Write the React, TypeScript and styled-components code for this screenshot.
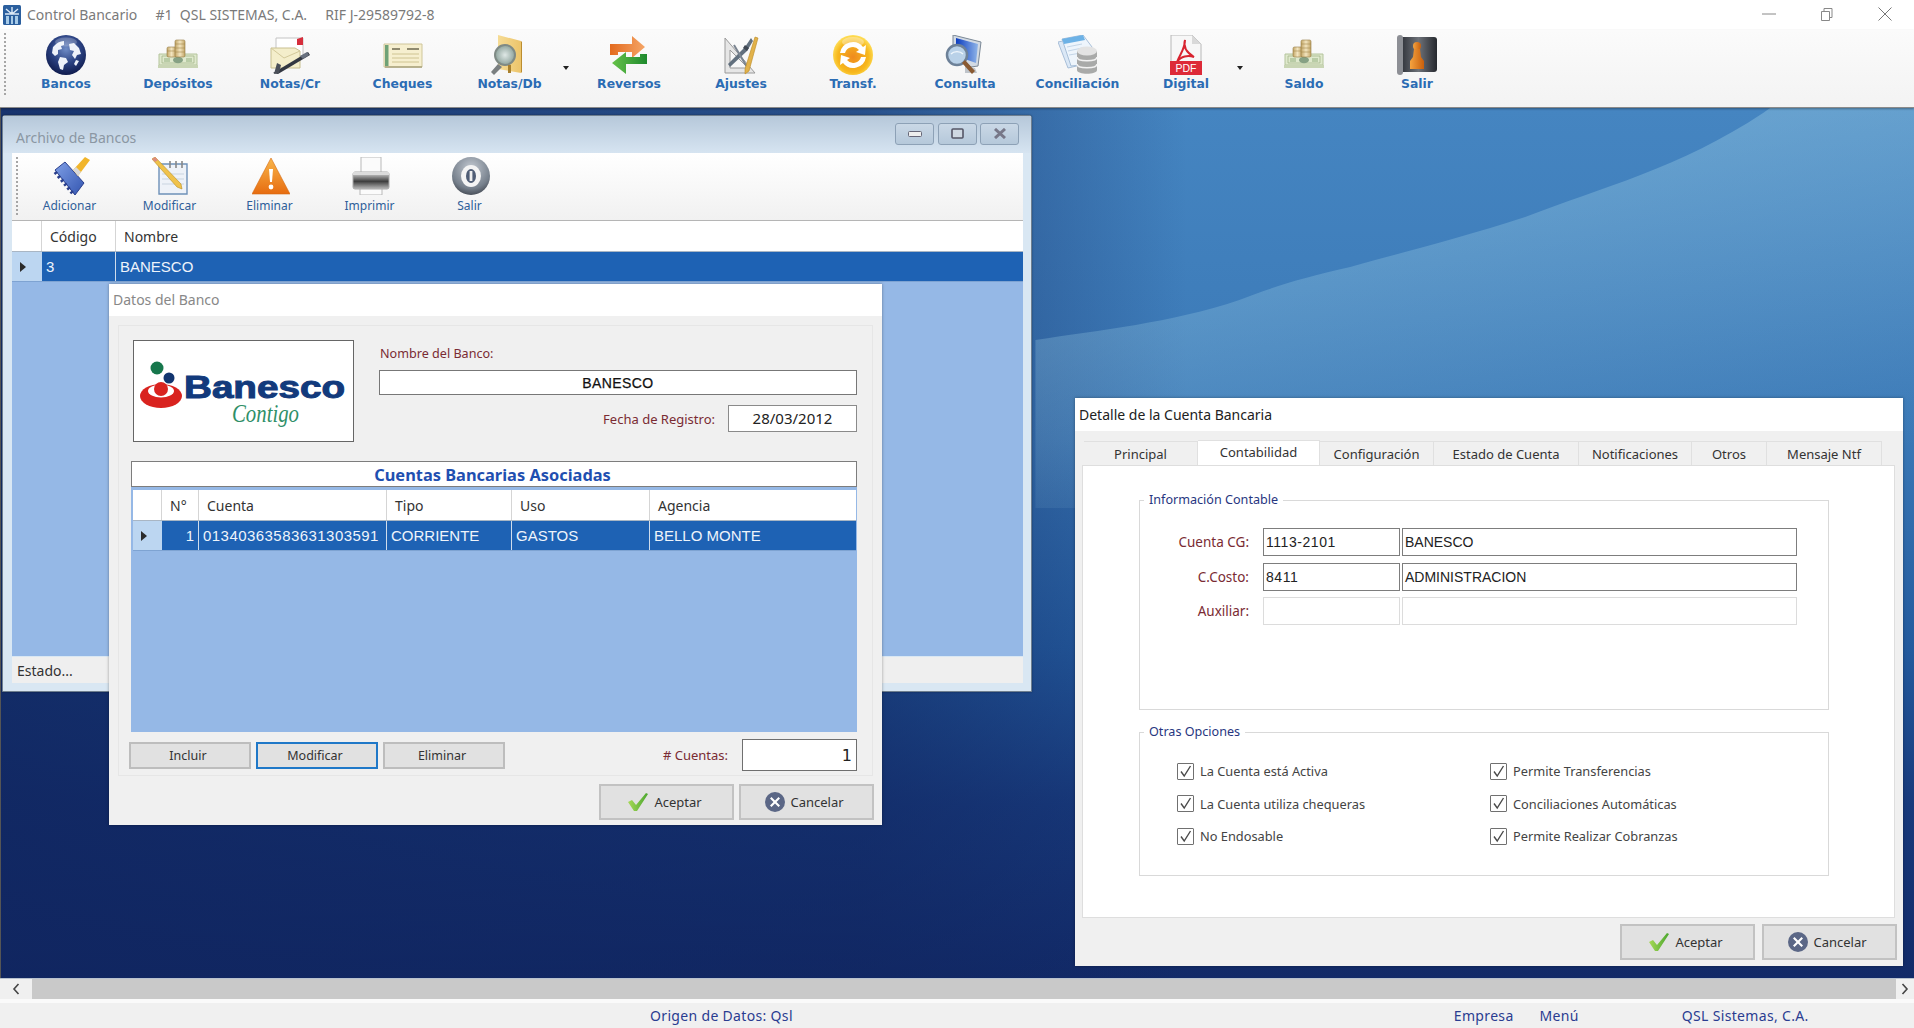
import React from "react";
import styled, { createGlobalStyle } from "styled-components";

const UI = `"Noto Sans", "Open Sans", sans-serif`;
const ARIAL = `"Liberation Sans", Arial, sans-serif`;

const Global = createGlobalStyle`
  html, body { margin: 0; padding: 0; height: 100%; overflow: hidden; background: #f0f0f0; }
  * { box-sizing: border-box; }
  #root { height: 100%; }
`;

const Page = styled.div`
  width: 1914px; height: 1028px; display: flex; flex-direction: column;
  font-family: ${UI}; overflow: hidden;
`;
const TitleBar = styled.div`
  height: 30px; background: #fff; display: flex; align-items: center; padding-left: 3px; flex: none;
`;
const TitleText = styled.span`
  margin-left: 6px; font-size: 14px; color: #7a7a7a; white-space: pre; position: relative; top: -1px;
`;
const WinControls = styled.div`
  margin-left: auto; display: flex; padding-right: 0; position: relative; top: -1px;
`;
const WinControl = styled.div`
  width: 58px; height: 28px; display: flex; align-items: center; justify-content: center;
`;
const MainToolbar = styled.div`
  height: 78px; flex: none; display: flex; position: relative; padding-left: 10px;
  background: linear-gradient(#fbfbfb, #f3f3f3);
  border-bottom: 1px solid #8a8a8a;
  box-shadow: 0 1px 2px rgba(0,0,0,.35);
  z-index: 2;
`;
const Grip = styled.div<{ $x: number; $h: number; $y: number }>`
  position: absolute; left: ${p => p.$x}px; top: ${p => p.$y}px; height: ${p => p.$h}px; width: 2px;
  background-image: linear-gradient(#a6a6a6 50%, transparent 50%); background-size: 2px 4px;
`;
const ToolButton = styled.div<{ $w: number }>`
  width: ${p => p.$w}px; flex: none; padding-top: 5px; display: flex; flex-direction: column; align-items: center;
`;
const ToolIcon = styled.div`
  width: 40px; height: 40px; display: flex;
`;
const ToolLabel = styled.div`
  font-family: "DejaVu Sans", Verdana, sans-serif; font-weight: 700; font-size: 12.4px; line-height: 18px; color: #2b6cb4; white-space: nowrap;
`;
const DropCaret = styled.div<{ $w: number; $x: number }>`
  flex: none; width: ${p => p.$w}px; height: 100%; position: relative;
  &::after {
    content: ""; position: absolute; left: ${p => p.$x}px; top: 36px;
    border-left: 3.5px solid transparent; border-right: 3.5px solid transparent; border-top: 4px solid #222;
  }
`;
const Desktop = styled.div`
  flex: 1; position: relative; border-left: 1px solid #555; overflow: hidden; background: #1a437f; min-height: 0;
`;
const Wallpaper = styled.svg`
  position: absolute; inset: 0; width: 100%; height: 100%; display: block;
`;
const Win = styled.div<{ $x: number; $y: number; $w: number; $h: number }>`
  position: absolute; left: ${p => p.$x}px; top: ${p => p.$y}px; width: ${p => p.$w}px; height: ${p => p.$h}px;
  display: flex; flex-direction: column;
`;
const ArchivoWin = styled(Win)`
  background: #d9e7f3; border: 1px solid #6f7f8f; border-radius: 3px 3px 0 0;
  box-shadow: 0 0 2px rgba(0,0,0,.4);
`;
const ArchivoHead = styled.div`
  height: 37px; flex: none; display: flex; align-items: center; padding: 6px 12px 0 13px;
  background: linear-gradient(#b6c8da, #d6e4f1);
`;
const FadedTitle = styled.span`
  font-size: 14px; color: #8b97a3;
`;
const CapButtons = styled.div`
  margin-left: auto; display: flex; gap: 3.5px; position: relative; top: -4px;
`;
const CapButton = styled.div`
  width: 39px; height: 22px; border: 1px solid #8da1b6; border-radius: 3px;
  background: linear-gradient(#cad8e6, #b5c8da); display: flex; align-items: center; justify-content: center;
`;
const ArchivoBody = styled.div`
  flex: 1; margin: 0 8px 8px 9px; display: flex; flex-direction: column; min-height: 0;
`;
const SubToolbar = styled.div`
  height: 68px; flex: none; display: flex; position: relative; padding-left: 9px;
  background: linear-gradient(#fff, #f1f1f1); border-bottom: 1px solid #b5b5b5;
`;
const SubButton = styled.div`
  width: 100px; flex: none; display: flex; flex-direction: column; align-items: center; padding-top: 4px;
`;
const SubLabel = styled.div`
  font-size: 12px; line-height: 16px; color: #2f5f9a; margin-top: 3px; white-space: nowrap; padding-right: 3px;
`;
const GridHead = styled.div<{ $cols: string }>`
  display: grid; grid-template-columns: ${p => p.$cols}; height: 31px; background: #fff; flex: none;
  border-bottom: 1px solid #a9b6c4;
`;
const HeadCell = styled.div`
  font-size: 14px; color: #333; padding-left: 8px; display: flex; align-items: center; border-right: 1px solid #d5d5d5;
  &:last-child { border-right: 0; }
`;
const GridRow = styled.div<{ $cols: string }>`
  display: grid; grid-template-columns: ${p => p.$cols}; height: 30px; background: #1e62b4; flex: none;
  border-bottom: 1px solid #7ea3d2;
`;
const RowCell = styled.div<{ $right?: boolean; $spaced?: boolean }>`
  font-family: ${ARIAL}; font-size: 15px; color: #eef4fb; padding: 0 4px; display: flex; align-items: center;
  justify-content: ${p => (p.$right ? "flex-end" : "flex-start")};
  letter-spacing: ${p => (p.$spaced ? "0.45px" : "0")};
  border-right: 1px solid #cfdcec; white-space: nowrap; overflow: hidden;
  &:last-child { border-right: 0; }
`;
const RowMarker = styled.div`
  background: #bcd6f1; display: flex; align-items: center; padding-left: 8px;
  &::after {
    content: ""; border-top: 5px solid transparent; border-bottom: 5px solid transparent; border-left: 6px solid #2b2b2b;
  }
`;
const BlueFill = styled.div`
  flex: 1; background: #95b8e6; min-height: 0;
`;
const WinStatus = styled.div`
  height: 26px; flex: none; background: #efefef; margin-top: 1px; padding-left: 5px; font-size: 14px; color: #333;
  display: flex; align-items: center;
`;
const Dialog = styled(Win)`
  background: #f0f0f0; box-shadow: 0 0 3px rgba(0,0,0,.35);
`;
const DialogHead = styled.div<{ $h: number; $strong?: boolean }>`
  height: ${p => p.$h}px; flex: none; background: #fff; display: flex; align-items: center; padding: 0 0 ${p => (p.$strong ? 0 : 2)}px 4px;
  font-size: 14px; color: ${p => (p.$strong ? "#222" : "#888")};
`;
const Panel = styled.div`
  margin: 9px 9px 0 9px; padding: 0 15px 5px 12px; height: 451px; flex: none; border: 1px solid #e6e6e6;
  display: flex; flex-direction: column;
`;
const TopRow = styled.div`
  display: flex; margin-top: 14px; margin-left: 2px; gap: 25px; height: 102px; flex: none;
`;
const LogoBox = styled.div`
  width: 221px; height: 102px; flex: none; background: #fff; border: 1px solid #666;
`;
const FieldCol = styled.div`
  flex: 1; display: flex; flex-direction: column; min-width: 0;
`;
const MaroonLabel = styled.div<{ $w?: number; $size?: number }>`
  font-size: ${p => p.$size ?? 13}px; color: #7a2b33; white-space: nowrap;
  ${p => (p.$w ? `width: ${p.$w}px; text-align: right; flex: none;` : "")}
`;
const NameLabel = styled(MaroonLabel)`
  margin-top: 4px; height: 20px; line-height: 20px; padding-left: 1px; font-size: 12.6px; margin-bottom: 1px;
`;
const NameBox = styled.div`
  margin-top: 5px; height: 25px; border: 1.5px solid #777; background: #fff; display: flex; align-items: center; justify-content: center;
  font-family: "Liberation Sans", Arial, sans-serif; font-weight: 400; font-size: 14px; letter-spacing: .4px; color: #111; -webkit-text-stroke: .25px #111;
`;
const DateRow = styled.div`
  margin-top: 10px; display: flex; justify-content: flex-end; align-items: center; gap: 13px;
`;
const DateBox = styled.div`
  width: 129px; height: 27px; background: #fff; border: 1px solid #8a8a8a; display: flex; align-items: center; justify-content: center;
  font-size: 15px; color: #222; padding-bottom: 1px;
`;
const SectionTitle = styled.div`
  margin-top: 19px; height: 26px; flex: none; background: #fff; border: 1.5px solid #7d7d7d;
  display: flex; align-items: center; justify-content: center;
  font-size: 16.4px; font-weight: 700; color: #1f4fb0; padding-right: 3px; white-space: nowrap;
`;
const GridArea = styled.div`
  height: 245px; flex: none; background: #95b8e6; padding: 3px 1px 0 2px; display: flex; flex-direction: column;
`;
const PanelFoot = styled.div`
  margin-top: 7px; height: 32px; flex: none; display: flex; align-items: center; margin-left: -2px; gap: 5px;
`;
const FlatButton = styled.div<{ $focus?: boolean }>`
  width: 122px; height: 27px; display: flex; align-items: center; justify-content: center; font-size: 12.5px; color: #333;
  background: #e1e1e1; border: 2px solid ${p => (p.$focus ? "#1f78c8" : "#bdbdbd")}; padding-right: 4px;
`;
const CountLabel = styled(MaroonLabel)`
  margin-left: auto; margin-right: 9px;
`;
const CountBox = styled.div`
  width: 115px; height: 32px; background: #fff; border: 1.5px solid #6f6f6f; display: flex; align-items: center; justify-content: flex-end;
  padding-right: 4px; font-family: "DejaVu Sans", sans-serif; font-weight: 400; font-size: 16px; color: #222;
`;
const DialogFoot = styled.div<{ $gap: number; $top: number; $right: number }>`
  display: flex; justify-content: flex-end; gap: ${p => p.$gap}px; margin-top: ${p => p.$top}px; padding-right: ${p => p.$right}px;
`;
const ActionButton = styled.div`
  width: 135px; height: 36px; display: flex; align-items: center; justify-content: center; gap: 5px;
  background: #e1e1e1; border: 2px solid #c2c2c2; font-size: 13px; color: #333; padding-right: 4px;
`;
const Tabs = styled.div`
  display: flex; margin: 9px 0 0 9px; height: 25px; align-items: flex-end; flex: none;
`;
const Tab = styled.div<{ $w: number; $active?: boolean }>`
  width: ${p => p.$w}px; height: ${p => (p.$active ? 25 : 24)}px; display: flex; align-items: center; justify-content: center; font-size: 13px; color: #333;
  background: ${p => (p.$active ? "#fff" : "#f0f0f0")};
  border: 1px solid #e0e0e0; border-width: 1px 1px 0 0;
  padding-bottom: ${p => (p.$active ? 3 : 0)}px;
`;
const TabPanel = styled.div`
  margin: 0 8px 0 7px; height: 453px; flex: none; background: #fff; border: 1px solid #dedede; padding: 34px 0 0 56px;
`;
const Group = styled.div<{ $h: number; $gap: number }>`
  position: relative; width: 690px; height: ${p => p.$h}px; border: 1px solid #d9d9d9; margin-bottom: ${p => p.$gap}px;
`;
const Legend = styled.div`
  position: absolute; left: 4px; top: -10px; padding: 0 5px; background: #fff; font-size: 12.6px; line-height: 18px; color: #27367f;
`;
const FormRows = styled.div`
  display: flex; flex-direction: column; gap: 6.5px; padding-top: 27px;
`;
const FormRow = styled.div`
  display: flex; align-items: center; height: 28px;
`;
const CodeInput = styled.div<{ $w: number; $off?: boolean; $spaced?: boolean }>`
  width: ${p => p.$w}px; height: 28px; background: #fff; flex: none; margin-left: 2px;
  border: ${p => (p.$off ? "1px solid #dcdcdc" : "1.5px solid #7d7d7d")};
  font-family: ${ARIAL}; font-size: 14px; color: #222; display: flex; align-items: center; padding-left: 2px;
  letter-spacing: ${p => (p.$spaced ? "0.55px" : "0")}; white-space: nowrap;
`;
const FormLabel = styled(MaroonLabel)`
  margin-right: 12px;
`;
const CheckGrid = styled.div`
  display: grid; grid-template-columns: 313px 1fr; row-gap: 14.5px; padding: 29px 0 0 37px;
`;
const CheckItem = styled.div`
  display: flex; align-items: center; gap: 6px; height: 18px; font-size: 12.8px; color: #444; white-space: nowrap;
`;
const Box = styled.div`
  width: 17px; height: 17px; flex: none; border: 1.5px solid #707070; background: #fff; border-radius: 1px;
  display: flex; align-items: center; justify-content: center;
`;
const ScrollBar = styled.div`
  height: 21px; flex: none; background: #f0f0f0; border-top: 1px solid #b8c2cf; display: flex; align-items: stretch;
`;
const ScrollArrow = styled.div`
  width: 32px; display: flex; align-items: center; justify-content: center;
`;
const ScrollThumb = styled.div`
  flex: 1; background: #c9c9c9;
`;
const ScrollArrowEnd = styled(ScrollArrow)`
  width: 18px;
`;
const StatusBar = styled.div`
  height: 29px; flex: none; background: #f0f0f0; border-top: 4px solid #fafafa; display: flex; align-items: center; padding-left: 650px;
  font-size: 14px; letter-spacing: .33px; color: #2a3c90;
`;
const StatusItem = styled.span<{ $left?: number }>`
  margin-left: ${p => p.$left ?? 0}px; white-space: nowrap;
`;

/* ---------- icons ---------- */
const S = styled.svg`display: block; flex: none;`;

const Globe = () => (
  <S width="40" height="40" viewBox="0 0 40 40">
    <defs><radialGradient id="gl" cx="50%" cy="35%" r="65%"><stop offset="0" stopColor="#6f8cc6"/><stop offset=".55" stopColor="#2b4282"/><stop offset="1" stopColor="#101c4e"/></radialGradient></defs>
    <circle cx="20" cy="20" r="20" fill="url(#gl)"/>
    <path d="M7 12Q12 6 18 6L18 10L15 11L16 14L12 15L12 19L9 21L6 18Z M14 22L20 23L22 27L18 30L17 35L14 34L12 27Z M23 9L28 8L33 13L35 19L31 20L29 24L26 20L28 16L24 15Z M30 25L33 26L30 31L28 29Z" fill="#eef2fa"/>
    <ellipse cx="20" cy="7" rx="11" ry="4.5" fill="#fff" opacity=".22"/>
  </S>
);
const Money = ({ id }: { id: string }) => (
  <S width="40" height="40" viewBox="0 0 40 40">
    <defs><linearGradient id={id} x1="0" x2="1"><stop offset="0" stopColor="#c2a566"/><stop offset=".5" stopColor="#f2e4bf"/><stop offset="1" stopColor="#c2a566"/></linearGradient></defs>
    <path d="M1 19h38v11H1z" fill="#dfe9cd" stroke="#b4c49c"/>
    <path d="M0 30h40v3H0z" fill="#c9d5b4"/>
    <path d="M4 21h32v7H4z" fill="none" stroke="#9db384" strokeWidth=".7"/>
    <ellipse cx="20" cy="25" rx="5" ry="3.2" fill="#86a184"/>
    <path d="M6 23h6v4H6zM28 23h6v4h-6z" fill="#b9cca6"/>
    <rect x="9" y="12" width="9" height="10" rx="1.5" fill={`url(#${id})`} stroke="#94793f" strokeWidth=".6"/>
    <rect x="17" y="5" width="10" height="17" rx="1.5" fill={`url(#${id})`} stroke="#94793f" strokeWidth=".6"/>
    <path d="M17 9h10M17 13h10M17 17h10M9 16h8" stroke="#a58a4e" strokeWidth=".6"/>
  </S>
);
const NotaCr = () => (
  <S width="40" height="40" viewBox="0 0 40 40">
    <path d="M6 3h27v18H6z" fill="#fff" stroke="#c4c4c4"/>
    <path d="M27 4l6-2v8h-6z" fill="#d62e3c"/>
    <path d="M1 13l24 0 5 3v17H1z" fill="#f4eecb" stroke="#c8bf90"/>
    <path d="M1 13l13 10 16-7" fill="none" stroke="#d3c99a"/>
    <path d="M3 38L38 17l2 3L8 39z" fill="#333842"/>
    <path d="M7 28l4 2-2 8-5 1z" fill="#4a4f58"/>
    <path d="M30 21l7-4 2 3-6 4z" fill="#6a7280"/>
  </S>
);
const Cheque = () => (
  <S width="40" height="40" viewBox="0 0 40 40">
    <path d="M1 9h38v23H1z" fill="#f6efcf" stroke="#cfc69a"/>
    <path d="M2 10h3.5v21H2z" fill="#6fa277"/>
    <path d="M9 14h8M24 14h12" stroke="#6e6a50" strokeWidth="1.4"/>
    <path d="M9 19h27M9 23h27M9 27h27" stroke="#cfc492"/>
    <path d="M2 32h37" stroke="#a9a27c" strokeWidth="1.5"/>
  </S>
);
const FolderSearch = () => (
  <S width="40" height="40" viewBox="0 0 40 40">
    <defs>
      <linearGradient id="fo" x1="0" x2="1"><stop offset="0" stopColor="#f6dc95"/><stop offset="1" stopColor="#ecc46a"/></linearGradient>
      <radialGradient id="le"><stop offset="0" stopColor="#dfe8e6"/><stop offset="1" stopColor="#8ea39c"/></radialGradient>
    </defs>
    <path d="M8 0l23 6v32l-23-4z" fill="url(#fo)"/>
    <path d="M31 6l1 1v30l-1 1z" fill="#bb8d30"/>
    <path d="M8 29L1 37l3 3 8-8z" fill="#7a7f80"/>
    <circle cx="15" cy="20" r="10" fill="url(#le)" stroke="#7f8a85" strokeWidth="2"/>
    <path d="M18 30h3v8h-3z" fill="#a8802e"/>
  </S>
);
const Reverse = () => (
  <S width="40" height="40" viewBox="0 0 40 40">
    <defs>
      <linearGradient id="or" x1="0" x2="1"><stop offset="0" stopColor="#e36a1e"/><stop offset="1" stopColor="#f5a566"/></linearGradient>
      <linearGradient id="gr" x1="0" x2="1"><stop offset="0" stopColor="#66c249"/><stop offset="1" stopColor="#1f8a2e"/></linearGradient>
    </defs>
    <path d="M1 9h22V1l13 11-13 11v-6H9v3H1z" fill="url(#or)"/>
    <path d="M38 19v10H17v10L3 28l14-11v5h14v-3z" fill="url(#gr)"/>
  </S>
);
const Tools = () => (
  <S width="40" height="40" viewBox="0 0 40 40">
    <path d="M4 3v35h30z M9 15v18h18z" fill="#e6e6e6" fillRule="evenodd" stroke="#9a9a9a"/>
    <path d="M30 3l-6 9-17 17 2 3 17-16 6-10z" fill="#62707e"/>
    <path d="M24 10l4 3-2 3-4-3z" fill="#3f4752"/>
    <path d="M13 10l13 22" stroke="#7a8490" strokeWidth="2"/>
    <path d="M34 2l3 1-9 33-4 3 0-5z" fill="#e2b24a" stroke="#b88822" strokeWidth=".6"/>
  </S>
);
const Transfer = () => (
  <S width="40" height="40" viewBox="0 0 40 40">
    <defs><radialGradient id="tr" cx="50%" cy="55%" r="55%"><stop offset="0" stopColor="#ef8a1e"/><stop offset=".7" stopColor="#f7b81d"/><stop offset="1" stopColor="#ffe05a"/></radialGradient></defs>
    <circle cx="20" cy="20" r="20" fill="url(#tr)"/>
    <path d="M7 18a13 13 0 0 1 23-6l3-2-1 10-9-3 3-2a8 8 0 0 0-14 3z" fill="#fff"/>
    <path d="M33 22a13 13 0 0 1-23 6l-3 2 1-10 9 3-3 2a8 8 0 0 0 14-3z" fill="#fff"/>
    <ellipse cx="20" cy="7" rx="11" ry="5" fill="#fff" opacity=".35"/>
  </S>
);
const Consult = () => (
  <S width="40" height="40" viewBox="0 0 40 40">
    <defs><linearGradient id="sc" x1="0" x2="1"><stop offset="0" stopColor="#0b3cc0"/><stop offset="1" stopColor="#8fb4e8"/></linearGradient></defs>
    <path d="M8 0l28 7-3 24-7 1-18-14z" fill="#d2dae4" stroke="#7b8896"/>
    <path d="M11 3l22 6-2 19-14-5-6-8z" fill="url(#sc)"/>
    <path d="M20 31l10 2 2 5-12 0z" fill="#bfc4ca"/>
    <circle cx="12" cy="20" r="10" fill="#b9d1e8" stroke="#6d8198" strokeWidth="2.5"/>
    <path d="M6 19a7 5 0 0 1 12 0" fill="none" stroke="#f0f6fc" strokeWidth="1.4"/>
    <path d="M17 28l3-3 10 11-3 3z" fill="#8a5a32"/>
  </S>
);
const Concil = () => (
  <S width="40" height="40" viewBox="0 0 40 40">
    <path d="M0 7l19-4 8 26-17 4z" fill="#dbe8f6" stroke="#a8bfd8"/>
    <path d="M4 4l21-4 9 12-3 17-18 2z" fill="#eef5fc" stroke="#a8bfd8"/>
    <path d="M4 4l21-4 2 5-21 4z" fill="#6db2e6"/>
    <path d="M9 12l15-3M10 16l14-3M11 20l12-2" stroke="#c4d6e8"/>
    <path d="M19 16v19c0 5 20 5 20 0V16z" fill="#a9aaa9"/>
    <ellipse cx="29" cy="16" rx="10" ry="4.5" fill="#e3e3e3"/>
    <path d="M19 22c0 5 20 5 20 0M19 29c0 5 20 5 20 0" fill="none" stroke="#f2f2f2" strokeWidth="1.6"/>
  </S>
);
const Pdf = () => (
  <S width="40" height="40" viewBox="0 0 40 40">
    <path d="M5 0h21l9 9v31H5z" fill="#f7f7f7" stroke="#b8b8b8"/>
    <path d="M26 0v9h9z" fill="#d9d9d9"/>
    <path d="M19 5c-2 6 1 12 9 17-6-2-13-1-17 5 3-8 8-13 8-22z" fill="none" stroke="#d8232f" strokeWidth="2"/>
    <rect x="4" y="26" width="32" height="14" fill="#dd2a38"/>
    <text x="20" y="37" textAnchor="middle" fontFamily="Liberation Sans, Arial, sans-serif" fontSize="10.5" fill="#fff">PDF</text>
  </S>
);
const Door = () => (
  <S width="40" height="40" viewBox="0 0 40 40">
    <defs>
      <linearGradient id="dr" x1="0" x2="1"><stop offset="0" stopColor="#2c2f36"/><stop offset=".5" stopColor="#6e7279"/><stop offset="1" stopColor="#25282e"/></linearGradient>
      <linearGradient id="pe" x1="0" x2="1"><stop offset="0" stopColor="#f5a340"/><stop offset="1" stopColor="#c85f0c"/></linearGradient>
    </defs>
    <rect x="3" y="2" width="37" height="35" rx="3" fill="url(#dr)"/>
    <rect x="0" y="0" width="6" height="40" rx="3" fill="#8d8f95"/>
    <circle cx="20" cy="11" r="4" fill="url(#pe)"/>
    <path d="M17 14h6l1 8 3 4v8H13v-8l3-4z" fill="url(#pe)"/>
  </S>
);
const AddIcon = () => (
  <S width="38" height="38" viewBox="0 0 38 38">
    <defs><linearGradient id="br" x1="0" x2="1" y1="0" y2="1"><stop offset="0" stopColor="#7f9fe6"/><stop offset="1" stopColor="#3355b0"/></linearGradient></defs>
    <path d="M3 13L13 5l19 21-9 12z" fill="url(#br)" stroke="#2a3f8c"/>
    <path d="M3 15l19 23" fill="none" stroke="#2a3f8c" strokeWidth="3.5" strokeDasharray="2.5 2.5"/>
    <path d="M21 13L33 0l5 3-12 16z" fill="#f1b52b"/>
    <path d="M21 13l5 6 3-4-5-5z" fill="#d9d9d9"/>
  </S>
);
const EditIcon = () => (
  <S width="38" height="38" viewBox="0 0 38 38">
    <path d="M7 7h28v30H7z" fill="#eef2f8" stroke="#6e91b8" strokeWidth="1.4"/>
    <path d="M10 17h22M10 22h22M10 27h22" stroke="#c9d4e0"/>
    <path d="M18 4v7M24 4v7M30 4v7" stroke="#888" strokeWidth="1.6"/>
    <path d="M0 2l3-2 26 27 1 5-5-2z" fill="#f0c24a" stroke="#b88e22" strokeWidth=".6"/>
    <path d="M0 2l3-2 3 3-3 2z" fill="#dd8d7c"/>
  </S>
);
const WarnIcon = () => (
  <S width="38" height="38" viewBox="0 0 38 38">
    <defs><linearGradient id="wa" x1="0" x2="0" y1="0" y2="1"><stop offset="0" stopColor="#f9b64a"/><stop offset="1" stopColor="#e76c10"/></linearGradient></defs>
    <path d="M19 1L38 37H0z" fill="url(#wa)" stroke="#d56a12" strokeWidth=".6"/>
    <path d="M17 12h4l-1 13h-2z" fill="#fff"/>
    <circle cx="19" cy="30" r="2.4" fill="#fff"/>
  </S>
);
const PrintIcon = () => (
  <S width="38" height="38" viewBox="0 0 38 38">
    <defs><linearGradient id="pr" x1="0" x2="0" y1="0" y2="1"><stop offset="0" stopColor="#e8e8e8"/><stop offset=".55" stopColor="#3d3d3d"/><stop offset="1" stopColor="#bbb"/></linearGradient></defs>
    <path d="M9 0h20v18H9zM8 29h22v9H8z" fill="#fbfbfb" stroke="#b9b9b9"/>
    <rect x="1" y="15" width="36" height="17" rx="2" fill="url(#pr)" stroke="#aaa"/>
    <rect x="1" y="15" width="36" height="3" fill="#dcdcdc"/>
  </S>
);
const ExitIcon = () => (
  <S width="38" height="38" viewBox="0 0 38 38">
    <defs><radialGradient id="ex" cx="50%" cy="30%" r="70%"><stop offset="0" stopColor="#c4cad2"/><stop offset=".75" stopColor="#76808c"/><stop offset="1" stopColor="#4a505a"/></radialGradient></defs>
    <circle cx="19" cy="19" r="19" fill="url(#ex)"/>
    <ellipse cx="19" cy="19" rx="10" ry="11" fill="#f4f4f4"/>
    <ellipse cx="19" cy="19" rx="5" ry="7" fill="#4f5d75"/>
    <rect x="17.6" y="14" width="2.8" height="10" fill="#eee"/>
  </S>
);
const CheckIcon = () => (
  <S width="22" height="20" viewBox="0 0 22 20">
    <defs><linearGradient id="ck" x1="0" x2="1"><stop offset="0" stopColor="#a7d957"/><stop offset="1" stopColor="#4aa62e"/></linearGradient></defs>
    <path d="M1 10l4-2 4 5L19 1l2 1L10 19H7z" fill="url(#ck)"/>
  </S>
);
const CancelIcon = () => (
  <S width="20" height="20" viewBox="0 0 20 20">
    <circle cx="10" cy="10" r="10" fill="#5b6786"/>
    <path d="M5 6.5L6.5 5 10 8.5 13.5 5 15 6.5 11.5 10 15 13.5 13.5 15 10 11.5 6.5 15 5 13.5 8.5 10z" fill="#fff"/>
  </S>
);
const AppIcon = () => (
  <S width="18" height="20" viewBox="0 0 18 20">
    <rect width="18" height="20" rx="1.5" fill="#2b5f9e"/>
    <path d="M9 2v7M3 4l6 5 6-5M2 9h14" stroke="#dce9f6" strokeWidth="1.4" fill="none"/>
    <path d="M3 11h3v8H3zM8 11h2v8H8zM12 11h3v8h-3z" fill="#a7cbe8"/>
  </S>
);
const Tick = () => (
  <S width="13" height="13" viewBox="0 0 13 13"><path d="M2 6.5L5.2 11 11.5 1" fill="none" stroke="#4a4a4a" strokeWidth="1.4"/></S>
);
const BanescoLogo = () => (
  <S width="219" height="100" viewBox="0 0 219 100">
    <circle cx="23" cy="27" r="6.5" fill="#16774c"/>
    <circle cx="35" cy="37" r="5.5" fill="#12356f"/>
    <ellipse cx="27" cy="55" rx="21" ry="12" fill="#d9231f"/>
    <ellipse cx="27" cy="50" rx="13" ry="6.5" fill="#fff"/>
    <circle cx="27" cy="48" r="7" fill="#d9231f"/>
    <text x="50" y="57" fontFamily="Liberation Sans, Arial, sans-serif" fontWeight="700" fontSize="31" textLength="161" lengthAdjust="spacingAndGlyphs" fill="#123a7c" stroke="#123a7c" strokeWidth="1">Banesco</text>
    <text x="98" y="81" fontFamily="Liberation Serif, serif" fontStyle="italic" fontSize="25" textLength="67" lengthAdjust="spacingAndGlyphs" fill="#2f8f68">Contigo</text>
  </S>
);

const MainItems: { label: string; w: number; icon: React.ReactNode; caret?: [number, number] }[] = [
  { label: "Bancos", w: 112, icon: <Globe /> },
  { label: "Depósitos", w: 112, icon: <Money id="mo1" /> },
  { label: "Notas/Cr", w: 112, icon: <NotaCr /> },
  { label: "Cheques", w: 113, icon: <Cheque /> },
  { label: "Notas/Db", w: 101, icon: <FolderSearch />, caret: [13, 2.5] },
  { label: "Reversos", w: 112, icon: <Reverse /> },
  { label: "Ajustes", w: 112, icon: <Tools /> },
  { label: "Transf.", w: 112, icon: <Transfer /> },
  { label: "Consulta", w: 112, icon: <Consult /> },
  { label: "Conciliación", w: 113, icon: <Concil /> },
  { label: "Digital", w: 104, icon: <Pdf />, caret: [10, -1.5] },
  { label: "Saldo", w: 112, icon: <Money id="mo2" /> },
  { label: "Salir", w: 114, icon: <Door /> },
];
const SubItems: { label: string; icon: React.ReactNode }[] = [
  { label: "Adicionar", icon: <AddIcon /> },
  { label: "Modificar", icon: <EditIcon /> },
  { label: "Eliminar", icon: <WarnIcon /> },
  { label: "Imprimir", icon: <PrintIcon /> },
  { label: "Salir", icon: <ExitIcon /> },
];
const TABS = [
  { t: "Principal", w: 114 }, { t: "Contabilidad", w: 122, active: true }, { t: "Configuración", w: 114 },
  { t: "Estado de Cuenta", w: 145 }, { t: "Notificaciones", w: 113 }, { t: "Otros", w: 75 }, { t: "Mensaje Ntf", w: 115 },
];
const CHECKS = ["La Cuenta está Activa", "Permite Transferencias", "La Cuenta utiliza chequeras", "Conciliaciones Automáticas", "No Endosable", "Permite Realizar Cobranzas"];

const ACTIONS = (
  <>
    <ActionButton><CheckIcon />Aceptar</ActionButton>
    <ActionButton><CancelIcon />Cancelar</ActionButton>
  </>
);

export default function App() {
  return (
    <Page>
      <Global />
      <TitleBar>
        <AppIcon />
        <TitleText>Control Bancario     #1  QSL SISTEMAS, C.A.     RIF J-29589792-8</TitleText>
        <WinControls>
          <WinControl><svg width="14" height="2"><path d="M0 1h14" stroke="#888" /></svg></WinControl>
          <WinControl><svg width="12" height="13" fill="none" stroke="#888"><path d="M.5 3.5h8v9h-8zM3 3V.5h8v9H9" /></svg></WinControl>
          <WinControl><svg width="14" height="14" stroke="#777"><path d="M.5.5l13 13M13.5.5l-13 13" /></svg></WinControl>
        </WinControls>
      </TitleBar>
      <MainToolbar>
        <Grip $x={4} $y={3} $h={64} />
        {MainItems.map(it => (
          <React.Fragment key={it.label}>
            <ToolButton $w={it.w}>
              <ToolIcon>{it.icon}</ToolIcon>
              <ToolLabel>{it.label}</ToolLabel>
            </ToolButton>
            {it.caret && <DropCaret $w={it.caret[0]} $x={it.caret[1]} />}
          </React.Fragment>
        ))}
      </MainToolbar>
      <Desktop>
        <Wallpaper viewBox="0 0 1914 870" preserveAspectRatio="none">
          <defs>
            <linearGradient id="wpV" x1="0" x2="0" y1="0" y2="1">
              <stop offset="0" stopColor="#4585c1" />
              <stop offset=".38" stopColor="#3a78b6" />
              <stop offset=".62" stopColor="#245b9e" />
              <stop offset=".8" stopColor="#183a7c" />
              <stop offset="1" stopColor="#122a68" />
            </linearGradient>
            <linearGradient id="wpH" x1="0" x2="1" y1="0" y2="0">
              <stop offset="0" stopColor="#10255f" stopOpacity=".85" />
              <stop offset=".45" stopColor="#10255f" stopOpacity=".55" />
              <stop offset=".62" stopColor="#10255f" stopOpacity="0" />
            </linearGradient>
            <linearGradient id="wpW" gradientUnits="userSpaceOnUse" x1="1500" y1="60" x2="1560" y2="400">
              <stop offset="0" stopColor="#a8d8ea" stopOpacity=".34" />
              <stop offset="1" stopColor="#a8d8ea" stopOpacity="0" />
            </linearGradient>
          </defs>
          <rect width="1914" height="870" fill="url(#wpV)" />
          <rect width="1914" height="870" fill="url(#wpH)" />
          <path d="M1763 5C1680 60 1600 80 1525 109C1460 130 1400 145 1350 159C1300 170 1270 180 1239 192C1170 215 1100 222 1035 232V400H1914V0H1770z" fill="url(#wpW)" />
        </Wallpaper>

        <ArchivoWin $x={1} $y={7} $w={1030} $h={577}>
          <ArchivoHead>
            <FadedTitle>Archivo de Bancos</FadedTitle>
            <CapButtons>
              <CapButton><svg width="14" height="6"><rect x=".5" y=".5" width="13" height="5" rx="1" fill="#eee" stroke="#667" /></svg></CapButton>
              <CapButton><svg width="13" height="11"><rect x="1" y="1" width="11" height="9" rx="1" fill="#cfd8e2" stroke="#556" strokeWidth="1.6" /></svg></CapButton>
              <CapButton><svg width="14" height="11"><path d="M2 1l10 9M12 1L2 10" stroke="#778" strokeWidth="3" /></svg></CapButton>
            </CapButtons>
          </ArchivoHead>
          <ArchivoBody>
            <SubToolbar>
              <Grip $x={4} $y={4} $h={58} />
              {SubItems.map(it => (
                <SubButton key={it.label}>{it.icon}<SubLabel>{it.label}</SubLabel></SubButton>
              ))}
            </SubToolbar>
            <GridHead $cols="30px 74px 1fr">
              <HeadCell />
              <HeadCell>Código</HeadCell>
              <HeadCell>Nombre</HeadCell>
            </GridHead>
            <GridRow $cols="30px 74px 1fr">
              <RowMarker />
              <RowCell>3</RowCell>
              <RowCell>BANESCO</RowCell>
            </GridRow>
            <BlueFill />
            <WinStatus>Estado...</WinStatus>
          </ArchivoBody>
        </ArchivoWin>

        <Dialog $x={108} $y={176} $w={773} $h={541}>
          <DialogHead $h={32}>Datos del Banco</DialogHead>
          <Panel>
            <TopRow>
              <LogoBox><BanescoLogo /></LogoBox>
              <FieldCol>
                <NameLabel>Nombre del Banco:</NameLabel>
                <NameBox>BANESCO</NameBox>
                <DateRow>
                  <MaroonLabel>Fecha de Registro:</MaroonLabel>
                  <DateBox>28/03/2012</DateBox>
                </DateRow>
              </FieldCol>
            </TopRow>
            <SectionTitle>Cuentas Bancarias Asociadas</SectionTitle>
            <GridArea>
              <GridHead $cols="29px 37px 188px 125px 138px 1fr">
                <HeadCell />
                <HeadCell>N°</HeadCell>
                <HeadCell>Cuenta</HeadCell>
                <HeadCell>Tipo</HeadCell>
                <HeadCell>Uso</HeadCell>
                <HeadCell>Agencia</HeadCell>
              </GridHead>
              <GridRow $cols="29px 37px 188px 125px 138px 1fr">
                <RowMarker />
                <RowCell $right>1</RowCell>
                <RowCell $spaced>01340363583631303591</RowCell>
                <RowCell>CORRIENTE</RowCell>
                <RowCell>GASTOS</RowCell>
                <RowCell>BELLO MONTE</RowCell>
              </GridRow>
            </GridArea>
            <PanelFoot>
              <FlatButton>Incluir</FlatButton>
              <FlatButton $focus>Modificar</FlatButton>
              <FlatButton>Eliminar</FlatButton>
              <CountLabel>#&nbsp;Cuentas:</CountLabel>
              <CountBox>1</CountBox>
            </PanelFoot>
          </Panel>
          <DialogFoot $gap={5} $top={8} $right={8}>{ACTIONS}</DialogFoot>
        </Dialog>

        <Dialog $x={1074} $y={290} $w={828} $h={568}>
          <DialogHead $h={33} $strong>Detalle de la Cuenta Bancaria</DialogHead>
          <Tabs>
            {TABS.map(t => <Tab key={t.t} $w={t.w} $active={t.active}>{t.t}</Tab>)}
          </Tabs>
          <TabPanel>
            <Group $h={210} $gap={22}>
              <Legend>Información Contable</Legend>
              <FormRows>
                <FormRow>
                  <FormLabel $w={109} $size={13.5}>Cuenta CG:</FormLabel>
                  <CodeInput $w={137} $spaced>1113-2101</CodeInput>
                  <CodeInput $w={395}>BANESCO</CodeInput>
                </FormRow>
                <FormRow>
                  <FormLabel $w={109} $size={13.5}>C.Costo:</FormLabel>
                  <CodeInput $w={137} $spaced>8411</CodeInput>
                  <CodeInput $w={395}>ADMINISTRACION</CodeInput>
                </FormRow>
                <FormRow>
                  <FormLabel $w={109} $size={13.5}>Auxiliar:</FormLabel>
                  <CodeInput $w={137} $off />
                  <CodeInput $w={395} $off />
                </FormRow>
              </FormRows>
            </Group>
            <Group $h={144} $gap={0}>
              <Legend>Otras Opciones</Legend>
              <CheckGrid>
                {CHECKS.map(c => (
                  <CheckItem key={c}><Box><Tick /></Box>{c}</CheckItem>
                ))}
              </CheckGrid>
            </Group>
          </TabPanel>
          <DialogFoot $gap={7} $top={6} $right={6}>{ACTIONS}</DialogFoot>
        </Dialog>
      </Desktop>
      <ScrollBar>
        <ScrollArrow><svg width="8" height="12" fill="none" stroke="#444" strokeWidth="1.6"><path d="M6.5 1L2 6l4.5 5" /></svg></ScrollArrow>
        <ScrollThumb />
        <ScrollArrowEnd><svg width="8" height="12" fill="none" stroke="#444" strokeWidth="1.6"><path d="M1.5 1L6 6l-4.5 5" /></svg></ScrollArrowEnd>
      </ScrollBar>
      <StatusBar>
        <StatusItem>Origen de Datos: Qsl</StatusItem>
        <StatusItem $left={661}>Empresa</StatusItem>
        <StatusItem $left={26}>Menú</StatusItem>
        <StatusItem $left={103}>QSL Sistemas, C.A.</StatusItem>
      </StatusBar>
    </Page>
  );
}
